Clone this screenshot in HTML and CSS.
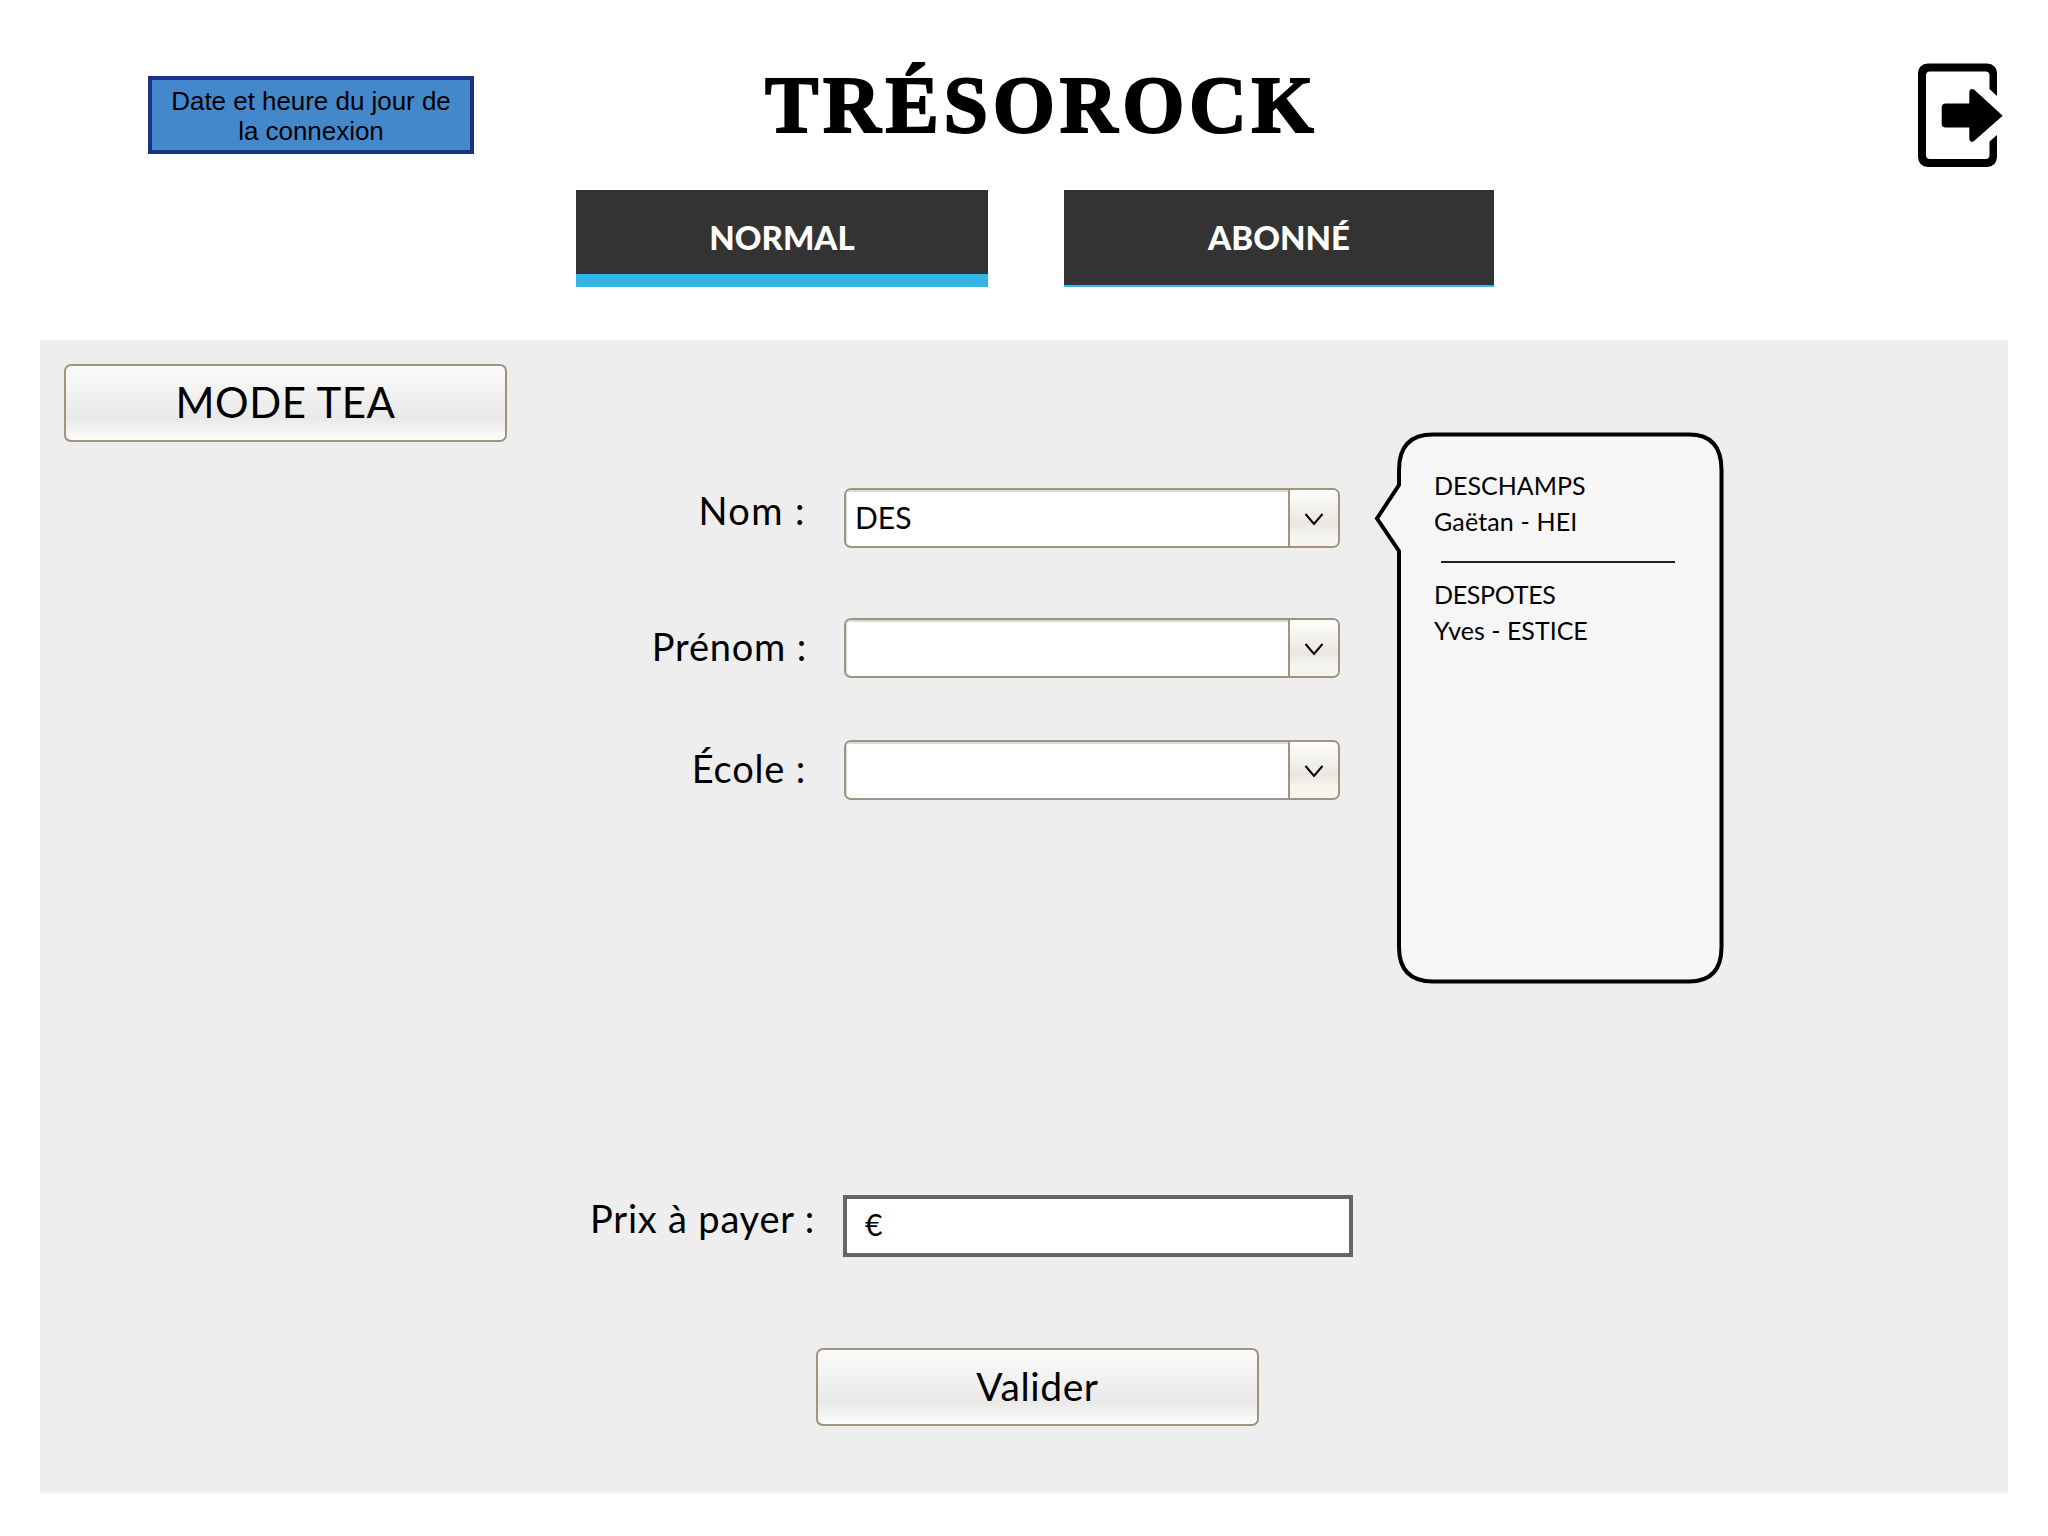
FILE: index.html
```html
<!DOCTYPE html>
<html lang="fr">
<head>
<meta charset="utf-8">
<title>Trésorock</title>
<link rel="stylesheet" href="styles.css">
</head>
<body>
<header class="header">
  <div class="date-box">Date et heure du jour de<br>la connexion</div>
  <h1 class="title">TRÉSOROCK</h1>
  <svg class="logout" viewBox="0 0 88 106" width="88" height="106">
    <path d="M81 34V11Q80.500 2 71 1.500H12Q2.500 2 2 11V95Q2.500 104.500 12 105H71Q80.500 104.500 81 95V73L73.500 79.500V93Q73.500 97 69.500 97H14Q10 97 10 93V13.500Q10 9.500 14 9.500H69.500Q73.500 9.500 73.500 13.500V27Z"/>
    <path d="M29 41.500H53.300V30Q54 25.500 58 27.500L86.700 53.700L58 79Q54 81.500 53.300 77V65.500H29Q25.700 65 25.700 62V45Q25.700 42 29 41.500Z"/>
  </svg>
</header>
<nav class="tabs">
  <div class="tab tab-active">NORMAL</div>
  <div class="tab tab-other">ABONNÉ</div>
</nav>
<main class="panel">
  <div class="main-col">
    <div class="btn btn-mode">MODE TEA</div>
    <div class="row row-nom">
      <div class="label">Nom :</div>
      <div class="select">
        <div class="field">DES</div>
        <div class="drop"><svg width="20" height="14" viewBox="0 0 20 14"><path d="M1.500 2L10 12L18.500 2" fill="none" stroke="#000" stroke-width="2"/></svg></div>
      </div>
    </div>
    <div class="row row-prenom">
      <div class="label">Prénom :</div>
      <div class="select">
        <div class="field"></div>
        <div class="drop"><svg width="20" height="14" viewBox="0 0 20 14"><path d="M1.500 2L10 12L18.500 2" fill="none" stroke="#000" stroke-width="2"/></svg></div>
      </div>
    </div>
    <div class="row row-ecole">
      <div class="label">École :</div>
      <div class="select">
        <div class="field"></div>
        <div class="drop"><svg width="20" height="14" viewBox="0 0 20 14"><path d="M1.500 2L10 12L18.500 2" fill="none" stroke="#000" stroke-width="2"/></svg></div>
      </div>
    </div>
    <div class="row row-prix">
      <div class="label">Prix à payer :</div>
      <div class="price">€</div>
    </div>
    <div class="btn btn-valider">Valider</div>
  </div>
  <aside class="bubble">
    <svg class="bubble-shape" width="352" height="554" viewBox="0 0 352 554"><path d="M59 2.500H315Q347.500 2.500 347.500 38V515Q347.500 549.500 315 549.500H59Q25 549.500 25 515V119L3 86.500L25 53V38Q25 2.500 59 2.500Z" fill="#f6f6f6" stroke="#000" stroke-width="4"/></svg>
    <div class="person">DESCHAMPS<br><span class="first-person">Gaëtan - HEI</span></div>
    <div class="rule"></div>
    <div class="person"><span class="second-person">DESPOTES</span><br>Yves - ESTICE</div>
  </aside>
</main>
</body>
</html>
```
FILE: styles.css
```css
* { box-sizing: border-box; }
body {
  margin: 0;
  width: 2048px;
  height: 1536px;
  overflow: hidden;
  background: #fff;
  color: #000;
  font-family: Lato, "Liberation Sans", sans-serif;
}
svg { display: block; }
.header { display: flex; height: 190px; }
.date-box {
  width: 326px;
  height: 78px;
  margin: 76px 0 0 148px;
  padding-top: 6px;
  border: 4px solid #1a3282;
  background: #4488cc;
  text-align: center;
  font: 26px/30px "Liberation Sans", Arial, sans-serif;
  letter-spacing: -0.04px;
  white-space: nowrap;
}
.title {
  width: 600px;
  margin: 57px 0 0 291px;
  font: bold 80px/96px "Liberation Serif", "Times New Roman", serif;
  letter-spacing: 4.7px;
  white-space: nowrap;
  -webkit-text-stroke: 2px #000;
}
.logout { margin: 62px 0 0 551px; flex: none; }
.tabs { display: flex; gap: 76px; height: 97px; padding-left: 576px; margin-bottom: 53px; }
.tab {
  background: #333;
  color: #fff;
  font-size: 33px;
  font-weight: 900;
  text-align: center;
  line-height: 94px;
}
.tab-active { width: 412px; border-bottom: 13px solid #33b5e5; }
.tab-other { width: 430px; border-bottom: 2px solid #33b5e5; }
.panel { display: flex; width: 1968px; height: 1153px; margin-left: 40px; background: #eee; }
.main-col { width: 1316px; padding-top: 24px; }
.btn {
  width: 443px;
  height: 78px;
  border: 2px solid #a09480;
  border-radius: 7px;
  background: linear-gradient(#fbfbfb, #e9e9e9 70%, #fcfcfc);
  text-align: center;
  line-height: 72px;
}
.btn-mode { margin-left: 24px; font-size: 42px; letter-spacing: 0.5px; }
.btn-valider { margin: 91px 0 0 776px; font-size: 39px; letter-spacing: 0.6px; }
.row { display: flex; height: 60px; }
.row-nom { margin-top: 46px; }
.row-prenom { margin-top: 70px; }
.row-ecole { margin-top: 62px; }
.row-prix { margin-top: 395px; height: 62px; }
.label {
  width: 804px;
  padding-right: 38px;
  text-align: right;
  font-size: 38px;
  line-height: 57px;
  letter-spacing: 0.8px;
  white-space: nowrap;
}
.row-nom .label { line-height: 45px; letter-spacing: 1.4px; }
.row-prenom .label { padding-right: 37px; }
.row-prix .label { line-height: 46px; padding-right: 29px; }
.select {
  display: flex;
  width: 496px;
  border: 2px solid #a09480;
  border-radius: 7px;
  overflow: hidden;
  background: #fff;
}
.field { flex: 1; padding-left: 9px; font-size: 30px; line-height: 55px; box-shadow: inset 1px 2px 1px #d8d8dc; }
.drop {
  display: flex;
  justify-content: center;
  align-items: center;
  width: 50px;
  padding-top: 2px;
  border-left: 2px solid #a09480;
  background: linear-gradient(#fdfdfc, #eae7df 60%, #f5f4ef 80%, #f5f4ef);
}
.price {
  width: 510px;
  margin-left: -1px;
  padding-left: 18px;
  border: 4px solid #666;
  background: #fff;
  font-size: 30px;
  line-height: 50px;
}
.bubble {
  position: relative;
  width: 352px;
  height: 554px;
  margin: 92px 0 0 18px;
  padding: 35px 0 0 60px;
  font-size: 25px;
  line-height: 36px;
}
.bubble-shape { position: absolute; left: 0; top: 0; }
.person { position: relative; white-space: nowrap; }
.first-person { letter-spacing: 0.15px; }
.second-person { letter-spacing: -0.3px; }
.rule { position: relative; width: 234px; height: 2px; margin: 22px 0 13px 7px; background: #222; }
```
